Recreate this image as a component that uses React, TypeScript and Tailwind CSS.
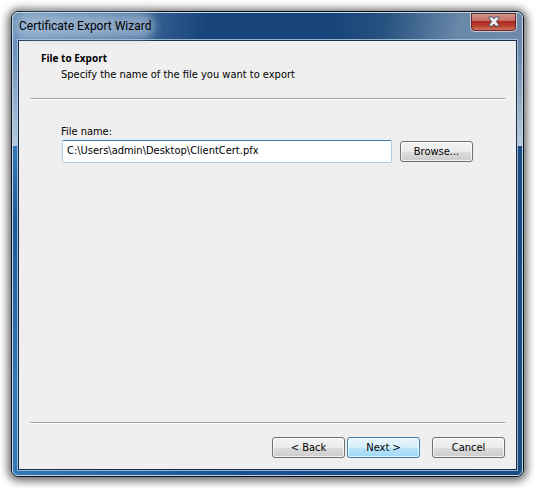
import type { ButtonHTMLAttributes } from "react";

function WizardButton({ primary = false, children, ...rest }: ButtonHTMLAttributes<HTMLButtonElement> & { primary?: boolean }) {
  const tone = primary
    ? "border-[#3c7fb1] bg-[linear-gradient(#eaf6fd,#d5effc_50%,#b9e4fa_50%,#9fd7f5)]"
    : "border-[#707070] bg-[linear-gradient(#f3f3f3,#ebebeb_50%,#dcdcdc_50%,#cdcdcd)]";
  return (
    <button
      type="button"
      className={`h-[21px] w-[73px] shrink-0 rounded-[3px] border pt-px text-center leading-[18px] shadow-[inset_0_0_0_1px_rgba(255,255,255,0.75)] ${tone}`}
      {...rest}
    >
      {children}
    </button>
  );
}

function TitleBar() {
  return (
    <header className="flex h-[27px] items-start justify-between pl-px">
      <h1 className="relative mt-[3px] font-[Roboto,'Open_Sans',sans-serif] text-[12px] leading-[20px] text-black">
        <span className="absolute inset-x-1 inset-y-1 rounded-full bg-[#b5c9df]/60 shadow-[0_0_9px_7px_rgba(181,201,223,0.6)]" />
        <span className="relative">Certificate Export Wizard</span>
      </h1>
      <button
        type="button"
        aria-label="Close"
        className="flex h-[19px] w-[47px] justify-center rounded-b-[5px] border border-t-0 border-[#d8c3cb] bg-[linear-gradient(#d69a91,#c66d62_45%,#aa2b20_46%,#b83e2b_70%,#d68066)] pt-[3px] shadow-[inset_0_0_0_1px_#542b38]"
      >
        <svg width="12" height="11" viewBox="0 0 12 11" aria-hidden="true">
          <path d="M1 1h3.500L6 3l1.500-2H11v1L8.300 5.500 11 9v1H7.500L6 8l-1.500 2H1V9l2.700-3.500L1 2z" fill="#f4f4f4" stroke="#4d526d" strokeWidth="1" />
        </svg>
      </button>
    </header>
  );
}

export default function App() {
  return (
    <div className="flex min-h-screen bg-white p-[11px] font-['DejaVu_Sans_Condensed','Open_Sans',sans-serif] text-[11px] text-black">
      <main className="relative isolate flex flex-1 flex-col rounded-[7px] border border-[#08101c] bg-[linear-gradient(rgba(20,72,132,0)_30%,rgba(20,72,132,0.65)_45%,rgba(20,72,132,0)_80%),linear-gradient(90deg,#3478b8,#18508e_45%,#1b4d83)] shadow-[0_1px_9px_3px_rgba(0,0,0,0.6)]">
        <div className="absolute inset-x-0 top-0 -z-10 h-[134px] rounded-t-[6px] bg-[linear-gradient(rgba(255,255,255,0)_30%,rgba(225,235,245,0.65)),linear-gradient(100deg,#7196bd,#547ba7_15%,#17447a_37%,#17447a_60%,#26517f_70%,#6887a9_84%,#718dab)]" />
        <div className="flex flex-1 flex-col rounded-[6px] border border-[#c3d7e8] px-[5px] pb-[5px]">
          <TitleBar />
          <form
            className="flex flex-1 flex-col border border-[#142e4c] bg-[#efefef] px-[11px] pb-[11px] shadow-[0_0_0_1px_rgba(176,203,225,0.8)]"
            onSubmit={(event) => event.preventDefault()}
          >
            <div className="border-b border-[#a0a0a0] px-[11px] pt-[9px] pb-[15px] shadow-[0_1px_0_white]">
              <h2 className="font-['Open_Sans','Noto_Sans',sans-serif] text-[10px] leading-[16px] font-bold">File to Export</h2>
              <p className="pl-5 leading-[17px]">Specify the name of the file you want to export</p>
            </div>
            <div className="flex-1 pt-[25px] pr-8 pl-[31px]">
              <label htmlFor="file-name" className="block leading-[16px]">File name:</label>
              <div className="ml-px flex items-center gap-2">
                <input
                  id="file-name"
                  type="text"
                  defaultValue="C:\Users\admin\Desktop\ClientCert.pfx"
                  className="h-[23px] min-w-0 flex-1 rounded-[2px] border border-[#a9cfe8] border-t-[#3d7bad] bg-white px-1 pb-[3px] outline-none"
                />
                <WizardButton>Browse...</WizardButton>
              </div>
            </div>
            <footer className="flex justify-end border-t border-[#a0a0a0] pt-[14px] shadow-[inset_0_1px_0_white]">
              <div className="mr-3 flex gap-[2px]">
                <WizardButton>&lt; Back</WizardButton>
                <WizardButton primary>Next &gt;</WizardButton>
              </div>
              <WizardButton>Cancel</WizardButton>
            </footer>
          </form>
        </div>
      </main>
    </div>
  );
}
